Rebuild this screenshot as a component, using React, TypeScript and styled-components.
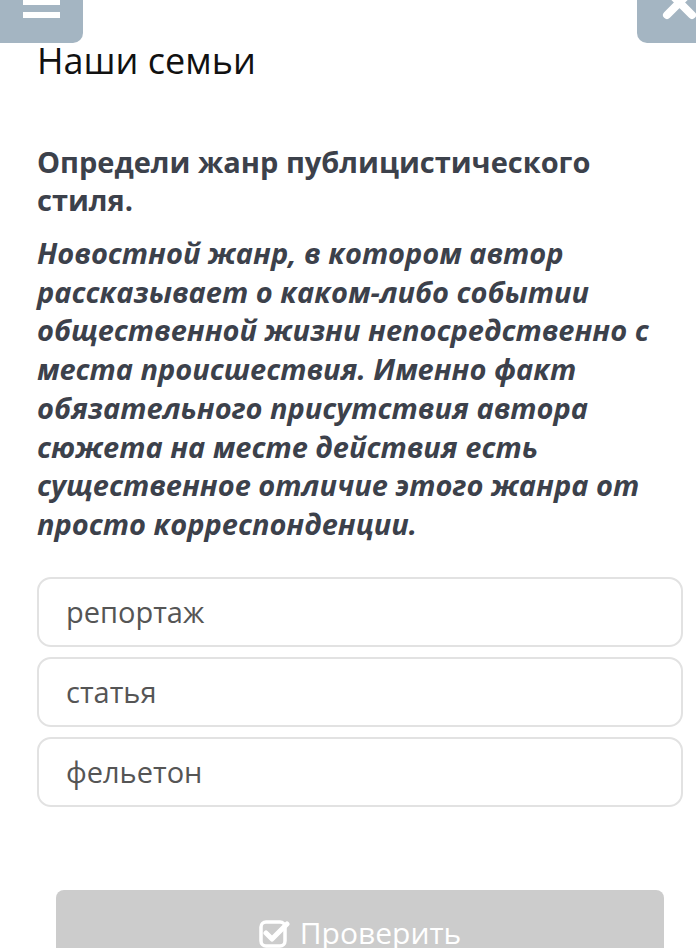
import styled, { createGlobalStyle } from 'styled-components';

const GlobalStyle = createGlobalStyle`
  html, body {
    margin: 0;
    padding: 0;
    background: #ffffff;
  }

  body {
    font-family: 'Open Sans', 'Noto Sans', sans-serif;
    overflow: hidden;
  }
`;

const Page = styled.div`
  width: 696px;
  height: 948px;
  overflow: hidden;
  position: relative;
  box-sizing: border-box;
  padding: 39px 13px 0 37px;
`;

// floating nav buttons, half scrolled out of view
const CornerButton = styled.div<{ side: 'left' | 'right' }>`
  position: absolute;
  top: 0;
  ${({ side }) => (side === 'left' ? 'left: 0; width: 83px;' : 'right: 0; width: 59px;')}
  height: 43px;
  background: #a4b5c2;
  border-radius: ${({ side }) => (side === 'left' ? '0 0 10px 0' : '0 0 0 10px')};
  overflow: hidden;
`;

const CornerIcon = styled.svg`
  position: absolute;
  top: 0;
  left: 0;
`;

const Title = styled.h1`
  margin: 0;
  font-size: 36px;
  line-height: 44px;
  font-weight: 400;
  color: #111111;
`;

const Question = styled.h2`
  margin: 60px 0 0;
  font-size: 29px;
  line-height: 38px;
  font-weight: 700;
  color: #3c414b;
`;

const Statement = styled.p`
  margin: 15px 0 0;
  font-size: 29px;
  line-height: 38.7px;
  font-weight: 700;
  font-style: italic;
  color: #3c414b;
`;

const Options = styled.div`
  display: flex;
  flex-direction: column;
  gap: 10px;
  margin-top: 33px;
`;

const Option = styled.div`
  height: 70px;
  box-sizing: border-box;
  border: 2px solid #e2e2e2;
  border-radius: 14px;
  display: flex;
  align-items: center;
  padding-left: 27px;
  font-size: 29px;
  color: #555555;
`;

const CheckButton = styled.div`
  margin: 83px 19px 0;
  height: 80px;
  background: #cccccc;
  border-radius: 8px;
  display: flex;
  justify-content: center;
  padding-top: 23px;
  box-sizing: border-box;
  gap: 10px;
  color: #ffffff;
  font-size: 30px;
  line-height: 40px;
`;

const CheckIcon = () => (
  <svg width="31" height="28" viewBox="0 0 31 28" style={{ marginTop: 7 }}>
    <rect x="2" y="2" width="24" height="24" rx="5" fill="none" stroke="#fff" strokeWidth="3.5" />
    <path d="M7 13 L13 19 L28 4" fill="none" stroke="#fff" strokeWidth="5" strokeLinecap="round" strokeLinejoin="round" />
  </svg>
);

const options = ['репортаж', 'статья', 'фельетон'];

export default function App() {
  return (
    <Page>
      <GlobalStyle />
      <CornerButton side="left">
        <CornerIcon width="83" height="43">
          <rect x="23" y="-1" width="37" height="6" fill="#fff" />
          <rect x="23" y="12" width="37" height="6" fill="#fff" />
        </CornerIcon>
      </CornerButton>
      <CornerButton side="right">
        <CornerIcon width="59" height="43">
          <path d="M30 -10 L55 15 M55 -10 L30 15" stroke="#fff" strokeWidth="8" strokeLinecap="round" />
        </CornerIcon>
      </CornerButton>

      <Title>Наши семьи</Title>
      <Question>Определи жанр публицистического стиля.</Question>
      <Statement>
        Новостной жанр, в котором автор рассказывает о каком-либо событии общественной жизни
        непосредственно с места происшествия. Именно факт обязательного присутствия автора
        сюжета на месте действия есть существенное отличие этого жанра от просто корреспонденции.
      </Statement>
      <Options>
        {options.map((o) => (
          <Option key={o}>{o}</Option>
        ))}
      </Options>
      <CheckButton>
        <CheckIcon />
        Проверить
      </CheckButton>
    </Page>
  );
}
